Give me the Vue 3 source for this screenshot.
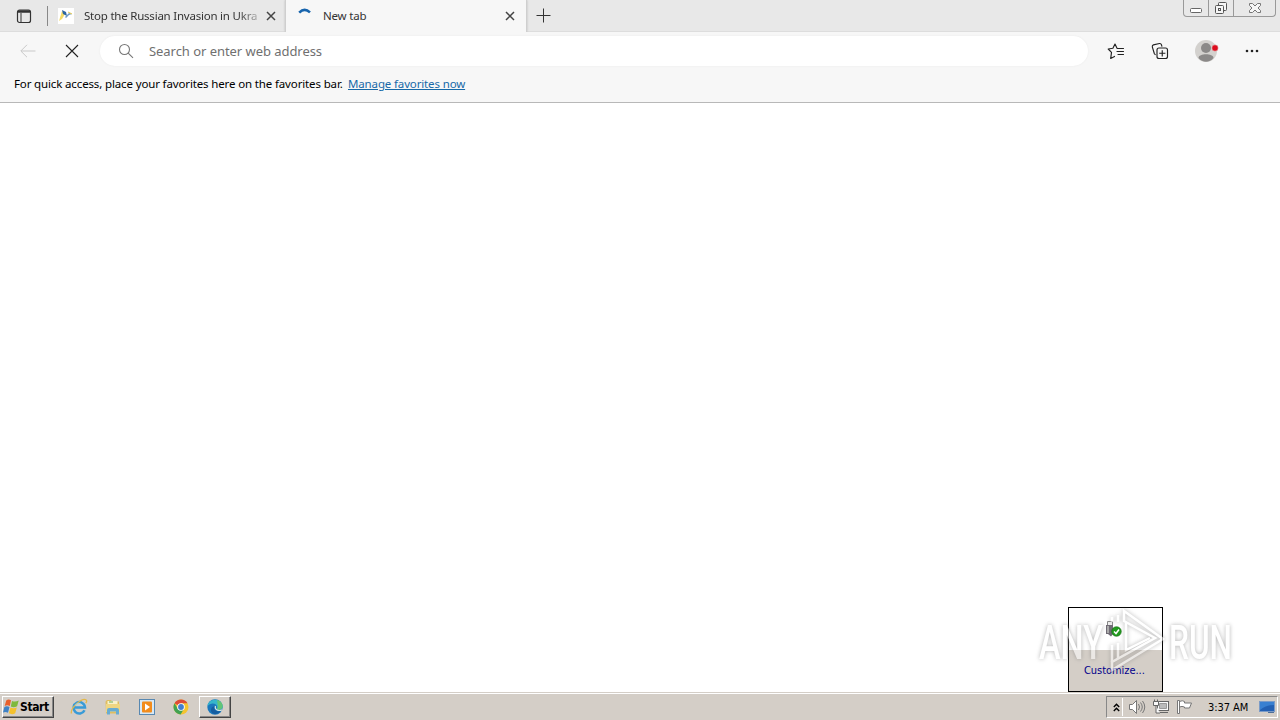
<template>
  <div class="screen">
    <header class="tabstrip">
      <div class="tab-actions">
        <svg width="16" height="16" viewBox="0 0 16 16" fill="none" stroke="#333">
          <rect x="1.5" y="2" width="13" height="12.5" rx="2" stroke-width="1.2" />
          <path d="M2 3.5h12" stroke-width="2.5" />
          <path d="M5 5v9" stroke-width="1" />
        </svg>
      </div>
      <div class="tab">
        <svg class="favicon" width="16" height="16" viewBox="0 0 16 16">
          <rect width="16" height="16" fill="#fff" />
          <path d="M1 13 4 3l3 3-3 5z" fill="#f5dc68" />
          <path d="m4 2 4 2 1 4-4-2z" fill="#2c65a3" />
          <path d="m7 9 4-4 3 1-3 1-3 3z" fill="#6d9ac5" />
          <path d="m10 4 4 2" stroke="#e3c84c" />
        </svg>
        <span class="tab-title first">Stop the Russian Invasion in Ukra</span>
        <svg class="tab-close" width="10" height="10" viewBox="0 0 10 10"><path d="m1 1 8 8M9 1 1 9" /></svg>
      </div>
      <div class="tab active">
        <svg class="favicon" width="16" height="16" viewBox="0 0 16 16" fill="none">
          <path d="M1.2 4.600Q6.500-.8 12 4.400" stroke="#1764ad" stroke-width="2.600" />
        </svg>
        <span class="tab-title second">New tab</span>
        <svg class="tab-close" width="10" height="10" viewBox="0 0 10 10"><path d="m1 1 8 8M9 1 1 9" /></svg>
      </div>
      <svg class="new-tab" width="15" height="15" viewBox="0 0 15 15"><path d="M7.5.5v14M.5 7.5h14" stroke="#333" /></svg>
      <div class="window-buttons">
        <span class="win min">
          <svg width="14" height="16" viewBox="0 0 14 16"><rect x="1.5" y="8.5" width="11" height="4" rx="1" fill="#fff" stroke="#666" /></svg>
        </span>
        <span class="win max">
          <svg width="14" height="16" viewBox="0 0 14 16" fill="#f5f5f5" stroke="#555">
            <rect x="4.5" y="2.5" width="8" height="8" rx="1" />
            <rect x="1.5" y="5.5" width="8" height="8" rx="1" />
            <rect x="4.5" y="8.5" width="2" height="2" />
          </svg>
        </span>
        <span class="win close">
          <svg width="14" height="16" viewBox="0 0 14 16"><path d="M1.5 3.5h3L7 6l2.500-2.500h3v2L10 8l2.500 2.500v2h-3L7 10l-2.500 2.500h-3v-2L4 8 1.500 5.500z" fill="#f7f7f7" stroke="#777" /></svg>
        </span>
      </div>
    </header>

    <div class="toolbar">
      <svg class="back" width="16" height="14" viewBox="0 0 16 14" fill="none" stroke="#c9c9c9"><path d="M15.500 7H1M7 .8.8 7 7 13.200" /></svg>
      <svg class="stop" width="14" height="14" viewBox="0 0 14 14" stroke="#222" stroke-width="1.1"><path d="m1 1 12 12M13 1 1 13" /></svg>
      <div class="address">
        <svg width="16" height="16" viewBox="0 0 16 16" fill="none" stroke="#777" stroke-width="1.1"><circle cx="6.500" cy="6.500" r="5" /><path d="m10.200 10.200 4.800 4.600" /></svg>
        <span>Search or enter web address</span>
      </div>
      <svg class="favorites" width="18" height="18" viewBox="0 0 18 18" fill="none" stroke="#222" stroke-width="1.15" stroke-linecap="round" stroke-linejoin="round">
        <path d="M11.500 6.500 10 6.200 8 2 5.900 6.200 1.200 7l3.300 3.400-.8 6.100L7.500 14.400" />
        <path d="M10.500 6.500h6M10 9.500h6.500M11 12.500h5.500" />
      </svg>
      <svg class="collections" width="18" height="18" viewBox="0 0 18 18" fill="none" stroke="#222" stroke-width="1.15">
        <path d="M4.500 13 3.300 11.500 1.300 4.800Q1.100 3.300 2.400 2.900L8.500 1.500q1.500-.2 1.900 1.100l.6 2" />
        <rect x="6" y="6" width="10.500" height="10.500" rx="2" fill="#f7f7f7" />
        <path d="M11.250 8.200v6.200M8.200 11.250h6.200" />
      </svg>
      <svg class="profile" width="24" height="24" viewBox="0 0 24 24">
        <circle cx="11" cy="12" r="11" fill="#d3d1ce" />
        <circle cx="11" cy="9" r="5" fill="#8b8988" />
        <path d="M3.500 19c0-5 15-5 15 0-4 5-11 5-15 0z" fill="#8b8988" />
        <circle cx="20" cy="9" r="3.200" fill="#dc0c1d" stroke="#e9d9d6" stroke-width=".5" />
      </svg>
      <svg class="more" width="14" height="4" viewBox="0 0 14 4" fill="#222"><circle cx="2" cy="2" r="1.300" /><circle cx="7" cy="2" r="1.300" /><circle cx="12" cy="2" r="1.300" /></svg>
    </div>

    <div class="favorites-bar">
      <span class="hint">For quick access, place your favorites here on the favorites bar.</span>
      <a class="manage">Manage favorites now</a>
    </div>

    <main class="page"></main>

    <footer class="taskbar">
      <button class="start">
        <svg width="16" height="16" viewBox="0 0 16 16">
          <path d="M3.200 1.500Q5.500-.2 8 1.300L6.800 7Q4.200 5.600 1.700 7z" fill="#e8602c" />
          <path d="M9 1.900q3 1.500 6.700-.3l-1.600 5.600Q10.600 9 7.800 7.500z" fill="#7eb93d" />
          <path d="M1.400 8Q4 6.700 6.500 8.100l-1.500 5.700Q2.500 12.300 0 13.600z" fill="#3f82c5" />
          <path d="M7.500 8.600q3 1.500 6.300-.1l-1.600 5.700q-3.100 1.800-6.300.1z" fill="#f4c12d" />
        </svg>
        <span>Start</span>
      </button>
      <svg class="launch ie" width="18" height="18" viewBox="0 0 18 18" fill="none">
        <path d="M14.500 12.200A5.700 5.700 0 1 1 15 9.500H5" stroke="#399bd7" stroke-width="2.500" />
        <path d="M1.500 15.500C-.2 10 12.500-.8 16.200 2c.8.700.4 2-.4 3.200" stroke="#e3b84b" stroke-width="1.300" />
        <path d="M5 7.500q3-3.500 7-.5" stroke="#a5dcf5" />
      </svg>
      <svg class="launch explorer" width="18" height="18" viewBox="0 0 18 18">
        <path d="M1.500 3.500 3 2h4l1 1.500h7v12h-13z" fill="#dfbd60" />
        <path d="M3.500 3h10v5h-10z" fill="#f8f1c9" />
        <path d="M2 6h14v8H2z" fill="#efd682" />
        <path d="M3 16.500v-4.500q0-2 2-2h8q2 0 2 2v4.500h-3v-3H6v3z" fill="#68acd2" />
        <path d="M5 4h4" stroke="#6cae5c" />
      </svg>
      <svg class="launch media" width="18" height="18" viewBox="0 0 18 18">
        <rect x="1.500" y="1.500" width="15" height="15" fill="#d7e8f5" stroke="#5888b1" />
        <rect x="4" y="3.500" width="10" height="11" rx="1" fill="#f28c1c" />
        <path d="m7 5.500 5 3.500-5 3.500z" fill="#fff" />
      </svg>
      <svg class="launch chrome" width="18" height="18" viewBox="0 0 18 18">
        <circle cx="9" cy="9" r="7.500" fill="#f4c430" />
        <path d="M9 9 2.500 5.200A7.500 7.500 0 0 1 15.500 5.200H9z" fill="#dc4b38" />
        <path d="M2.500 5.200A7.500 7.500 0 0 0 8.600 16.500L12 10.800 5.800 10.800z" fill="#41a252" />
        <circle cx="9" cy="9" r="3.800" fill="#fff" /><circle cx="9" cy="9" r="2.900" fill="#427ed0" />
      </svg>
      <button class="running">
        <svg width="18" height="18" viewBox="0 0 18 18">
          <circle cx="9" cy="9" r="7.700" fill="#1977bd" />
          <path d="M1.400 8C3-.5 15.500-.2 16.700 8.300c0 3-3 4.100-6 2.900C12.500 8 10 5.500 6.500 5.500Q3.500 5.500 1.400 8z" fill="#36b6cb" />
          <path d="M11 2c4 1 5.800 3.300 5.700 6.300-.2 3-3 4-6 2.900 2-2 .8-5 .3-9.200z" fill="#62c577" />
          <path d="M8.500 8.300c-1.200 3 1.200 5.800 6 5-2 3-8.500 4-9.500-.3-.5-2.500 1-4.500 3.500-4.700z" fill="#155da0" />
          <path d="M9.500 8q-1 2.800 2 4.200 2.700.8 4.500-.5" fill="none" stroke="#d7e5df" stroke-width="1.200" />
        </svg>
      </button>
      <div class="tray">
        <span class="expand">
          <svg width="7" height="9" viewBox="0 0 7 9" fill="none" stroke="#000" stroke-width="1.400"><path d="m.8 4 2.700-2.700L6.200 4M.8 8l2.700-2.700L6.200 8" /></svg>
        </span>
        <svg class="sound" width="18" height="16" viewBox="0 0 18 16" fill="none" stroke="#777">
          <path d="M1.500 5.500h3l4-4v13l-4-4h-3z" fill="#fff" />
          <path d="M10.500 5q2 3 0 6M12.500 3.500q3.500 4.500 0 9M14.500 2q4.500 6 0 12" />
        </svg>
        <svg class="network" width="17" height="16" viewBox="0 0 17 16" fill="#f9f9f9" stroke="#666">
          <rect x="4.500" y="2.500" width="11" height="9" /><path d="M6.500 4.500h7v5h-7z" fill="#bbb" stroke="#999" />
          <path d="M7 13.500h8M.5 2.500h5v4h-5zM1.500.5v2M4.500.5v2M3 6.500v7.500h4" />
        </svg>
        <svg class="flag" width="17" height="16" viewBox="0 0 17 16" fill="#fff" stroke="#777"><path d="M3.500 2.500q3-1.500 5 0v1.500h7l-2 5H8.500V8Q6 6.800 3.500 8z" /><path d="M1.500 1.500h2v13h-2z" /></svg>
        <span class="clock">3:37 AM</span>
        <svg class="desktop" width="16" height="13" viewBox="0 0 16 13">
          <rect x=".5" y=".5" width="15" height="10" fill="#2360b3" stroke="#7b9bc7" />
          <path d="M1 1h14v3Q7 4 1 9z" fill="#3980d1" /><path d="M9 11.500h6" stroke="#4e6e98" />
        </svg>
      </div>
    </footer>

    <div class="tray-popup">
      <div class="tray-icons">
        <svg width="18" height="20" viewBox="0 0 18 20">
          <path d="M3.500 2.500h5v5h-5z" fill="#eee" stroke="#888" /><path d="M2 6h7v9l-2 2.500-3-2.500H2z" fill="#706b75" /><path d="M3 7h2v7H3z" fill="#aaa" />
          <circle cx="12.500" cy="12.500" r="4.800" fill="#229a1e" stroke="#126c13" stroke-width=".6" /><path d="m10 12.500 2 2 3-4" fill="none" stroke="#fff" stroke-width="1.500" />
        </svg>
      </div>
      <a class="customize">Customize...</a>
    </div>

    <svg class="watermark" width="204" height="70" viewBox="0 0 204 70">
      <g class="mark-text">
        <text x="5" y="54" textLength="64" lengthAdjust="spacingAndGlyphs">ANY</text>
        <text x="135" y="54" textLength="63" lengthAdjust="spacingAndGlyphs">RUN</text>
      </g>
      <g class="mark-logo">
        <path d="M90 6v10l31 17-43 24v8l51-31z" />
        <path d="M78 12v5M84 10v7M78 40v17M84 38v15" />
        <path d="M92 18v27l24-12" />
      </g>
    </svg>
  </div>
</template>

<script setup>
</script>

<style>
body {
  margin: 0;
}
</style>

<style scoped>
.screen {
  position: relative;
  display: flex;
  flex-direction: column;
  width: 1280px;
  height: 720px;
  overflow: hidden;
  background: #fff;
  font-family: "Noto Sans", sans-serif;
  font-size: 12px;
  color: #333;
}
svg {
  display: block;
  flex-shrink: 0;
}
.tabstrip {
  display: flex;
  height: 31px;
  flex-shrink: 0;
  background: #e8e8e8;
  border-bottom: 1px solid #ddd;
}
.tab-actions {
  box-sizing: border-box;
  width: 48px;
  height: 20px;
  margin-top: 6px;
  padding: 2px 0 0 16px;
  border-right: 1px solid #888;
}
.tab {
  box-sizing: border-box;
  display: flex;
  align-items: center;
  width: 237px;
  height: 32px;
  padding: 0 9px 0 10px;
}
.tab.active {
  width: 242px;
  padding-left: 12px;
  padding-right: 11px;
  background: #f7f7f7;
  border-left: 1px solid #cfcfcf;
  border-right: 1px solid #cfcfcf;
  box-shadow: 0 0 2px #bbb;
  clip-path: inset(0 -3px 0 -3px);
}
.tab-title {
  margin-left: 10px;
  line-height: 18px;
  white-space: nowrap;
}
.first {
  width: 175px;
  font-size: 11.5px;
  letter-spacing: -0.22px;
  mask-image: linear-gradient(90deg, #000 88%, rgba(0, 0, 0, 0.25));
}
.second {
  width: 172px;
  margin-left: 9px;
  font-size: 11.5px;
  letter-spacing: -0.2px;
}
.tab-close {
  margin-left: auto;
  stroke: #444;
  stroke-width: 1.5;
}
.new-tab {
  margin: 8px 0 0 9px;
}
.window-buttons {
  box-sizing: border-box;
  display: flex;
  width: 93px;
  height: 17px;
  margin-left: auto;
  margin-right: 4px;
  border: 1px solid #999;
  border-top: 0;
  border-radius: 0 0 4px 4px;
}
.win {
  display: flex;
  justify-content: center;
  width: 24px;
  border-right: 1px solid #999;
}
.win.close {
  flex: 1;
  border: 0;
}
.toolbar {
  display: flex;
  align-items: center;
  height: 38px;
  flex-shrink: 0;
  background: #f7f7f7;
}
.back {
  margin-left: 20px;
}
.stop {
  margin-left: 29px;
}
.address {
  box-sizing: border-box;
  display: flex;
  align-items: center;
  gap: 15px;
  width: 988px;
  height: 30px;
  margin-left: 21px;
  padding-left: 18px;
  border-radius: 15px;
  background: #fff;
  box-shadow: 0 0 2px #e8e8e8;
  font-size: 13px;
  letter-spacing: -0.05px;
  color: #707070;
}
.favorites {
  margin-left: 19px;
}
.collections {
  margin-left: 26px;
}
.profile {
  margin-left: 26px;
}
.more {
  margin-left: 26px;
}
.favorites-bar {
  box-sizing: border-box;
  display: flex;
  height: 33px;
  flex-shrink: 0;
  padding: 5px 14px 0;
  background: #f7f7f7;
  border-bottom: 1px solid #b8b8b8;
  font-size: 11.5px;
  line-height: 18px;
  color: #000;
  white-space: nowrap;
}
.hint {
  width: 334px;
  letter-spacing: -0.14px;
}
.manage {
  color: #1769a8;
  text-decoration: underline;
  letter-spacing: -0.14px;
}
.page {
  flex: 1;
  background: #fff;
}
.taskbar {
  box-sizing: border-box;
  display: flex;
  align-items: center;
  height: 28px;
  flex-shrink: 0;
  padding: 1px 2px 0;
  background: #d4cec7;
  border-top: 1px solid #d4cec7;
  box-shadow: inset 0 1px #fff;
  font-family: "DejaVu Sans Condensed", "DejaVu Sans", sans-serif;
}
.start,
.running {
  box-sizing: border-box;
  display: flex;
  align-items: center;
  height: 22px;
  padding: 0;
  background: #d4cec7;
  border: 1px solid;
  border-color: #fff #444 #444 #fff;
  box-shadow: inset -1px -1px #888;
}
.start {
  width: 52px;
  gap: 1px;
  font: bold 12px "DejaVu Sans Condensed", "DejaVu Sans", sans-serif;
  letter-spacing: -0.4px;
  color: #000;
}
.ie {
  margin-left: 16px;
}
.launch + .launch {
  margin-left: 16px;
}
.running {
  justify-content: center;
  width: 32px;
  margin-left: 9px;
}
.tray {
  box-sizing: border-box;
  display: flex;
  align-items: center;
  width: 172px;
  height: 22px;
  margin-left: auto;
  border: 1px solid;
  border-color: #888 #fff #fff #888;
}
.expand {
  box-sizing: border-box;
  display: flex;
  align-items: center;
  justify-content: center;
  width: 16px;
  height: 18px;
  padding-left: 3px;
  border-right: 1px solid #fff;
}
.sound {
  margin-left: 5px;
}
.network {
  margin-left: 7px;
}
.flag {
  margin-left: 6px;
}
.clock {
  width: 42px;
  margin-left: 15px;
  font-size: 11px;
  letter-spacing: -0.05px;
  color: #000;
  white-space: nowrap;
}
.desktop {
  margin-left: 9px;
}
.tray-popup {
  position: absolute;
  left: 1068px;
  top: 607px;
  box-sizing: border-box;
  display: flex;
  flex-direction: column;
  width: 95px;
  height: 85px;
  border: 1px solid #000;
  background: #d4cec7;
}
.tray-icons {
  box-sizing: border-box;
  display: flex;
  align-items: center;
  justify-content: center;
  height: 42px;
  flex-shrink: 0;
  padding-right: 6px;
  background: #fff;
}
.customize {
  padding: 1px 0 0 15px;
  line-height: 40px;
  font-family: "DejaVu Sans Condensed", "DejaVu Sans", sans-serif;
  font-size: 11px;
  letter-spacing: -0.05px;
  color: #00008b;
  white-space: nowrap;
}
.watermark {
  position: absolute;
  left: 1034px;
  top: 605px;
  overflow: visible;
  opacity: 0.55;
  filter: drop-shadow(0 0 2px #777);
  pointer-events: none;
}
.mark-text {
  font-family: Roboto, sans-serif;
  font-size: 48px;
  font-weight: 500;
  fill: #fff;
}
.mark-logo {
  fill: none;
  stroke: #fff;
  stroke-width: 2.5;
}
</style>
